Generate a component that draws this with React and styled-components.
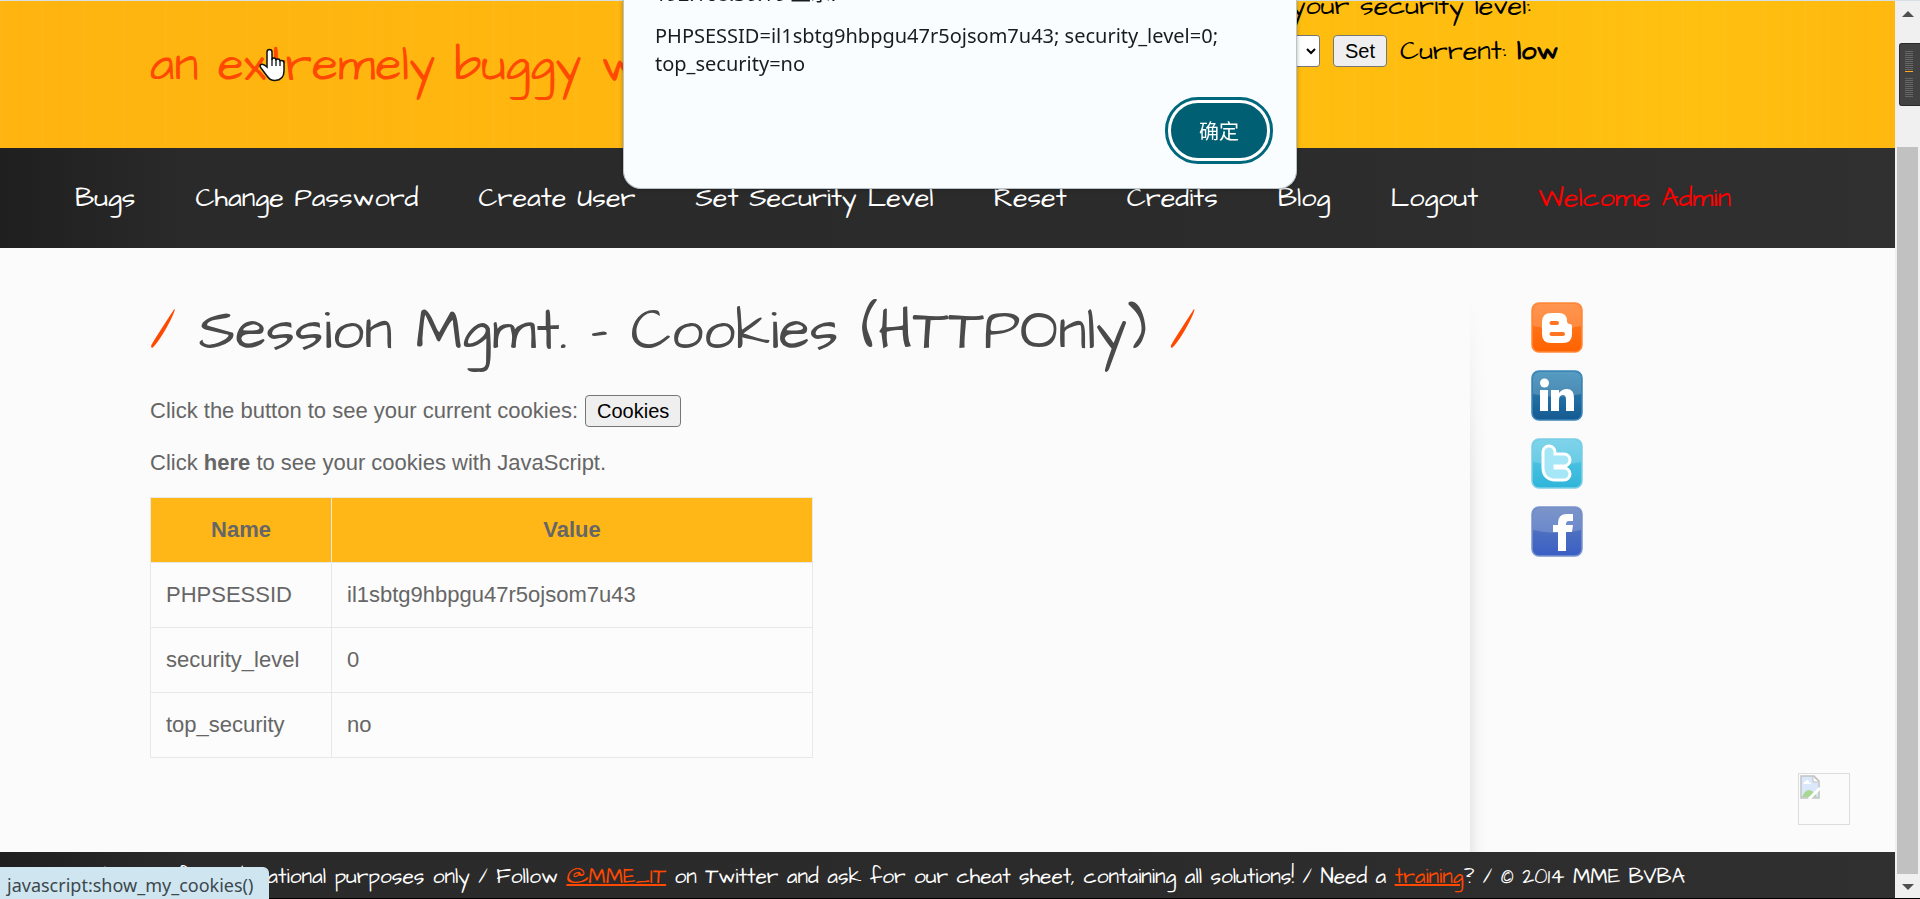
import React from "react";
import styled, { createGlobalStyle } from "styled-components";

const hand = `"Architects Daughter", Lato, sans-serif`;
const ui = `"Segoe UI", "Noto Sans", "Noto Sans CJK SC", sans-serif`;

const Global = createGlobalStyle`
  *, *::before, *::after { box-sizing: border-box; }
  body { margin: 0; font-family: Arial, "Liberation Sans", sans-serif; font-size: 22px; color: #666; background: #fbfbfb; }
`;

const Frame = styled.div`
  display: flex;
  min-height: 100vh;
  border-top: 1px solid #d5dfe6;
  border-bottom: 1px solid #000;
`;
const Page = styled.div`
  flex: 1;
  min-width: 0;
  display: flex;
  flex-direction: column;
`;
const Header = styled.header`
  display: flex;
  justify-content: space-between;
  height: 147px;
  padding: 0 338px 0 150px;
  overflow: hidden;
  font-family: ${hand};
  background:
    repeating-linear-gradient(90deg, rgba(255, 255, 255, 0.02) 0 3px, transparent 3px 17px, rgba(255, 150, 0, 0.02) 17px 22px, transparent 22px 41px),
    linear-gradient(90deg, #ffb40f, #ffb70f 35%, #ffbd0f 70%, #ffc010 90%, #ffb80f);
`;
const Tagline = styled.h2`
  margin: 33px 0 0;
  font-size: 48px;
  line-height: 64px;
  font-weight: 400;
  color: #ff4800;
  white-space: nowrap;
`;
const LevelForm = styled.form`
  display: flex;
  flex-direction: column;
  gap: 7px;
  margin-top: -14px;
  width: 320px;
  color: #000;
  font-size: 27px;
  line-height: 38px;
  white-space: nowrap;
`;
const LevelRow = styled.div`
  display: flex;
  align-items: center;
  gap: 13px;
`;
const LevelSelect = styled.select`
  width: 83px;
  height: 32px;
  padding: 0 4px;
  border: 1px solid #767676;
  border-radius: 3px;
  background: #fff;
  font: 20px Arial, "Liberation Sans", sans-serif;
`;
const Button = styled.button`
  height: 32px;
  padding: 0 11px;
  border: 1px solid #767676;
  border-radius: 4px;
  background: #efefef;
  color: #000;
  font: 20px Arial, "Liberation Sans", sans-serif;
`;

const dark = `
  background: linear-gradient(90deg, #1f1f1f, #2a2a2a 10%, #2b2b2b 60%, #303030);
`;
const Nav = styled.nav`
  display: flex;
  align-items: center;
  justify-content: space-between;
  height: 100px;
  padding: 0 164px 0 75px;
  font-family: ${hand};
  font-size: 27px;
  ${dark}
`;
const NavLink = styled.a`
  color: ${(p) => (p.$alert ? "#f00" : "#fff")};
  text-decoration: none;
  white-space: nowrap;
`;
const Body = styled.div`
  flex: 1;
  display: flex;
  background: #fbfbfb;
`;
const Main = styled.main`
  flex: 1;
  padding: 42px 0 0 150px;
`;
const Title = styled.h1`
  margin: 0 0 19px;
  font-family: ${hand};
  font-size: 57px;
  line-height: 84px;
  font-weight: 400;
  color: #4a4a4a;
  white-space: nowrap;
`;
const Slash = styled.span`
  color: #ff4800;
`;
const Line = styled.p`
  display: flex;
  align-items: center;
  gap: 7px;
  height: 36px;
  margin: 0 0 16px;
`;
const Here = styled.a`
  color: inherit;
  font-weight: 700;
  text-decoration: none;
`;
const Table = styled.table`
  width: 663px;
  border-collapse: collapse;
  background: #fcfcfc;
`;
const Th = styled.th`
  height: 65px;
  border: 1px solid #e8e8e8;
  background: #ffb717;
`;
const Td = styled.td`
  width: ${(p) => (p.$name ? "181px" : "auto")};
  height: 65px;
  padding: 0 15px;
  border: 1px solid #e8e8e8;
`;
const Side = styled.aside`
  display: flex;
  justify-content: space-between;
  width: 425px;
  padding: 54px 45px 27px 61px;
  background:
    linear-gradient(#fbfbfb 8%, rgba(251, 251, 251, 0) 40%),
    linear-gradient(90deg, #e9e9e9, #f6f6f6 8px, #fbfbfb 18px);
`;
const Socials = styled.div`
  display: flex;
  flex-direction: column;
  gap: 17px;
`;
const Social = styled.a`
  display: block;
  width: 52px;
  height: 51px;
`;
const Broken = styled.div`
  align-self: flex-end;
  width: 52px;
  height: 52px;
  padding: 1px;
  border: 1px solid #dcdcdc;
`;
const Footer = styled.footer`
  height: 46px;
  padding: 0 210px 0 64px;
  display: flex;
  justify-content: flex-end;
  font-family: ${hand};
  font-size: 21px;
  line-height: 49px;
  color: #fff;
  white-space: nowrap;
  ${dark}
`;
const FootLink = styled.a`
  color: #ff4800;
  text-decoration-thickness: 2px;
`;

const Scrollbar = styled.div`
  width: 25px;
  display: flex;
  flex-direction: column;
  align-items: center;
  padding: 10px 0 8px;
  background: #f0f0f0;
`;
const Arrow = styled.div`
  border: 6px solid transparent;
  border-top-width: ${(p) => (p.$up ? 0 : "6px")};
  border-bottom-width: ${(p) => (p.$up ? "6px" : 0)};
  border-${(p) => (p.$up ? "bottom" : "top")}-color: #505050;
`;
const Thumb = styled.div`
  flex: 1;
  width: 21px;
  margin: 130px 0 10px;
  background: #c1c1c1;
`;
const Handle = styled.div`
  position: fixed;
  top: 43px;
  right: 0;
  width: 21px;
  height: 63px;
  padding: 7px 7px 7px 5px;
  border: 1px solid #2a2a2a;
  border-right: 0;
  border-radius: 3px 0 0 3px;
  background: #424242;
`;
const Ticks = styled.div`
  height: 20px;
  background: repeating-linear-gradient(#666 0 1px, transparent 1px 2px);
  & + & { margin-top: 6px; }
  &:first-child { height: 21px; border-bottom: 1px solid #ffa826; }
`;

const Dialog = styled.div`
  position: fixed;
  top: 0;
  left: 50%;
  transform: translateX(-50%);
  width: 674px;
  height: 189px;
  padding: 0 25px 0 31px;
  border: 1px solid #b9c2c6;
  border-top: 0;
  border-radius: 0 0 18px 18px;
  background: #f9fdff;
  color: #191c1d;
  font-family: ${ui};
  font-size: 20px;
  line-height: 28px;
  overflow: hidden;
  box-shadow: 0 0 4px rgba(0, 0, 0, 0.3);
`;
const Origin = styled.div`
  margin: -20px 0 14px;
`;
const Confirm = styled.button`
  display: block;
  margin: 25px 4px 0 auto;
  width: 96px;
  height: 55px;
  border: 0;
  border-radius: 27px;
  outline: 3px solid #00687c;
  outline-offset: 3px;
  background: #005f72;
  box-shadow: 0 0 0 3px #fff;
  color: #fff;
  font: 20px ${ui};
`;
const Status = styled.div`
  position: fixed;
  left: 0;
  bottom: 0;
  height: 32px;
  width: 269px;
  padding-left: 7px;
  border-radius: 0 6px 0 0;
  background: #cfe6f0;
  color: #3d484d;
  font: 18px/36px ${ui};
  white-space: nowrap;
`;
const Cursor = styled.svg`
  position: fixed;
  left: 259px;
  top: 48px;
`;

const links = ["Bugs", "Change Password", "Create User", "Set Security Level", "Reset", "Credits", "Blog", "Logout"];
const cookies = [
  ["PHPSESSID", "il1sbtg9hbpgu47r5ojsom7u43"],
  ["security_level", "0"],
  ["top_security", "no"],
];

function Tile({ id, top, bottom, edge, children }) {
  return (
    <svg width="52" height="51" viewBox="0 0 52 51">
      <defs>
        <linearGradient id={id} x1="0" y1="0" x2="0" y2="1">
          <stop offset="0" stopColor={top} />
          <stop offset="1" stopColor={bottom} />
        </linearGradient>
      </defs>
      <rect x="1" y="1" width="50" height="49" rx="7" fill={`url(#${id})`} stroke={edge} strokeWidth="1.5" />
      <path d="M2 9Q2 2 9 2H43Q50 2 50 9V24Q26 30 2 24Z" fill="#fff" opacity=".18" />
      {children}
    </svg>
  );
}

export default function App() {
  return (
    <>
      <Global />
      <Frame>
        <Page>
          <Header>
            <Tagline>an extremely buggy web app !</Tagline>
            <LevelForm onSubmit={(e) => e.preventDefault()}>
              <label htmlFor="level">Set your security level:</label>
              <LevelRow>
                <LevelSelect id="level" defaultValue="low">
                  <option>low</option>
                  <option>medium</option>
                  <option>high</option>
                </LevelSelect>
                <Button>Set</Button>
                <span>Current: <b>low</b></span>
              </LevelRow>
            </LevelForm>
          </Header>
          <Nav>
            {links.map((l) => <NavLink href="#" key={l}>{l}</NavLink>)}
            <NavLink as="span" $alert>Welcome Admin</NavLink>
          </Nav>
          <Body>
            <Main>
              <Title><Slash>/</Slash> Session Mgmt. - Cookies (HTTPOnly) <Slash>/</Slash></Title>
              <Line>Click the button to see your current cookies: <Button>Cookies</Button></Line>
              <Line><span>Click <Here href="#">here</Here> to see your cookies with JavaScript.</span></Line>
              <Table>
                <thead><tr><Th>Name</Th><Th>Value</Th></tr></thead>
                <tbody>
                  {cookies.map(([n, v]) => <tr key={n}><Td $name>{n}</Td><Td>{v}</Td></tr>)}
                </tbody>
              </Table>
            </Main>
            <Side>
              <Socials>
                <Social href="#" aria-label="Blogger">
                  <Tile id="bl" top="#ff7f2a" bottom="#ff6200" edge="#ff8a3c">
                    <path d="M20 11H28Q36 11 36 19Q36 22 39 22Q41 22 41 25V32Q41 41 32 41H20Q11 41 11 32V20Q11 11 20 11Z" fill="#fff" />
                    <path d="M20.500 21H26M20.500 32H32" stroke="#ff7420" strokeWidth="4" strokeLinecap="round" />
                  </Tile>
                </Social>
                <Social href="#" aria-label="LinkedIn">
                  <Tile id="li" top="#3287b5" bottom="#155a92" edge="#3d86b8">
                    <circle cx="13.500" cy="13" r="4.500" fill="#fff" />
                    <path d="M9 20H17V41H9ZM20 20H28V23Q31 19 36 19Q43 19 43 28V41H35V30Q35 25 32 25Q28 25 28 30V41H20Z" fill="#fff" />
                  </Tile>
                </Social>
                <Social href="#" aria-label="Twitter">
                  <Tile id="tw" top="#63cbe5" bottom="#2eb5da" edge="#7fcfe6">
                    <path d="M18 14V30Q18 36 24 36H33M18 22H33" fill="none" stroke="#fff" strokeWidth="15" strokeLinecap="round" strokeLinejoin="round" />
                    <path d="M18 14V30Q18 36 24 36H33M18 22H33" fill="none" stroke="#a5e6f7" strokeWidth="9" strokeLinecap="round" strokeLinejoin="round" />
                  </Tile>
                </Social>
                <Social href="#" aria-label="Facebook">
                  <Tile id="fb" top="#5f7fbe" bottom="#3a5fc4" edge="#7c95cd">
                    <path d="M27 45V26H22V19H27V17Q27 8 36 8H42V15H38Q35 15 35 18V19H42L41 26H35V45Z" fill="#fff" />
                  </Tile>
                </Social>
              </Socials>
              <Broken>
                <svg width="20" height="24" viewBox="0 0 20 24">
                  <path d="M1 1H14L19 6V23H1Z" fill="#dbe7fa" stroke="#c3c3c3" strokeWidth="1.500" />
                  <path d="M13 1V7H19Z" fill="#fff" stroke="#c3c3c3" />
                  <path d="M3 9Q4 6 6 6Q8 3 9 7Q11 7 11 9Z" fill="#fff" />
                  <path d="M2 22Q5 15 9 15Q13 15 17 22Z" fill="#a8d793" />
                  <path d="M9 24L20 13" stroke="#fff" strokeWidth="3" />
                </svg>
              </Broken>
            </Side>
          </Body>
          <Footer>
            <span>bWAPP is for educational purposes only / Follow <FootLink href="#">@MME_IT</FootLink> on Twitter and ask for our cheat sheet, containing all solutions! / Need a <FootLink href="#">training</FootLink>? / © 2014 MME BVBA</span>
          </Footer>
        </Page>
        <Scrollbar>
          <Arrow $up />
          <Thumb />
          <Arrow />
        </Scrollbar>
      </Frame>
      <Handle><Ticks /><Ticks /></Handle>
      <Dialog role="dialog" aria-label="Cookies">
        <Origin>192.168.30.10 显示:</Origin>
        <div>PHPSESSID=il1sbtg9hbpgu47r5ojsom7u43; security_level=0;<br />top_security=no</div>
        <Confirm>确定</Confirm>
      </Dialog>
      <Status>javascript:show_my_cookies()</Status>
      <Cursor width="26" height="34" viewBox="0 0 26 34">
        <path d="M8 19V4Q8 1.500 10.500 1.500Q13 1.500 13 4V12Q13 10 15 10Q17 10 17 12.500Q17 11 19 11Q21 11 21 13.500Q21 12.500 22.500 12.500Q25 12.500 25 15V23Q25 32 16 32.500Q11 32.500 8 28L2 20Q0 17 2 16.500Q4.500 15.500 8 19Z" fill="#fff" stroke="#111" strokeWidth="1.500" />
        <path d="M13 11V18M17 12V18M21 13V18" stroke="#111" strokeWidth="1.300" />
      </Cursor>
    </>
  );
}
